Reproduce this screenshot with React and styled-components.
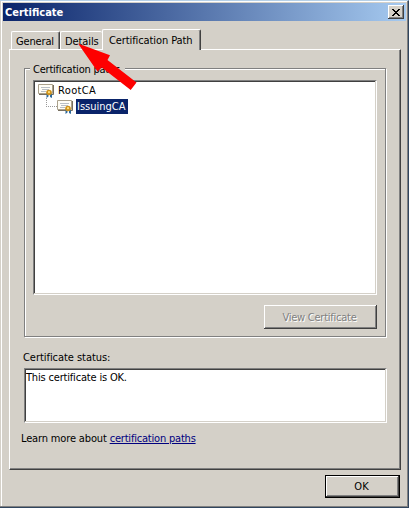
import React from "react";
import styled, { createGlobalStyle } from "styled-components";

const face = "#d4d0c8";
const shadow = "#808080";
const dark = "#404040";

const GlobalStyle = createGlobalStyle`
  * { box-sizing: border-box; }
  body { margin: 0; overflow: hidden; }
`;

const Window = styled.div`
  position: relative;
  display: flex;
  flex-direction: column;
  width: 409px;
  height: 508px;
  padding: 1px 1px 0 1px;
  background: ${face};
  border-style: solid;
  border-width: 1px 1px 1px 0;
  border-color: #b5d0e8 #30455e #30455e;
  box-shadow: inset -1px -1px 0 ${shadow}, inset 1px 0 0 ${face}, inset 2px 1px 0 #fff;
  font: 11px/13px "DejaVu Sans Condensed", "DejaVu Sans", sans-serif;
  font-stretch: condensed;
  color: #000;
  white-space: nowrap;
`;

const Text = styled.span`
  letter-spacing: ${(p) => p.$ls || 0}px;
`;

const TitleBar = styled.header`
  display: flex;
  align-items: center;
  justify-content: space-between;
  height: 18px;
  margin: 1px 1px 0 2px;
  padding: 0 2px 0 2px;
  background: linear-gradient(90deg, #0a246a, #a6caf0);
  color: #fff;
  font-weight: bold;
`;

const CloseButton = styled.button`
  display: flex;
  align-items: center;
  justify-content: center;
  width: 16px;
  height: 14px;
  padding: 0;
  border: 0;
  background: ${face};
  box-shadow: inset -1px -1px 0 ${dark}, inset 1px 1px 0 #fff, inset -2px -2px 0 ${shadow};
`;

const TabStrip = styled.nav`
  display: flex;
  align-items: flex-end;
  height: 28px;
  padding-left: 10px;
`;

const Tab = styled.div`
  position: relative;
  z-index: ${(p) => (p.$active ? 1 : 0)};
  width: ${(p) => p.$w}px;
  height: ${(p) => (p.$active ? 21 : 18)}px;
  margin-bottom: ${(p) => (p.$active ? -1 : 0)}px;
  padding: ${(p) => (p.$active ? "4px 0 0 6px" : "3px 0 0 4px")};
  background: ${face};
  border-top: 1px solid #fff;
  border-left: 1px solid #fff;
  border-right: ${(p) => (p.$edge ? `1px solid ${dark}` : "0")};
  border-radius: 2px 2px 0 0;
  box-shadow: ${(p) => (p.$edge ? `inset -1px 0 0 ${shadow}` : "none")};
`;

const Page = styled.main`
  display: flex;
  flex-direction: column;
  width: 392px;
  height: 421px;
  margin-left: 8px;
  padding: 18px 12px 0 14px;
  border: 1px solid;
  border-color: #fff ${dark} ${dark} #fff;
  box-shadow: inset -1px -1px 0 ${shadow};
`;

const Group = styled.section`
  display: flex;
  flex-direction: column;
  width: 362px;
  height: 269px;
  padding: 0 8px;
  border: 1px solid ${shadow};
  box-shadow: 1px 1px 0 #fff, inset 1px 1px 0 #fff;
`;

const Legend = styled.div`
  align-self: flex-start;
  width: 95px;
  height: 13px;
  margin: -6px 0 4px -3px;
  padding-left: 3px;
  background: ${face};
`;

const Sunken = styled.div`
  flex: none;
  width: ${(p) => p.$w}px;
  height: ${(p) => p.$h}px;
  padding: ${(p) => p.$pad};
  background: #fff;
  border: 1px solid;
  border-color: ${shadow} #fff #fff ${shadow};
  box-shadow: inset -1px -1px 0 ${face}, inset 1px 1px 0 ${dark};
`;

const TreeRow = styled.div`
  display: flex;
  align-items: center;
  height: 16px;
`;

const Branch = styled.span`
  width: 11px;
  height: 16px;
  margin-left: 8px;
  background:
    repeating-linear-gradient(180deg, #999 0 1px, transparent 1px 2px) 0 0 / 1px 9px no-repeat,
    repeating-linear-gradient(90deg, #999 0 1px, transparent 1px 2px) 0 8px / 11px 1px no-repeat;
`;

const NodeName = styled.span`
  height: 15px;
  padding: 1px;
  margin-left: 2px;
  background: ${(p) => (p.$selected ? "#0a246a" : "transparent")};
  color: ${(p) => (p.$selected ? "#fff" : "#000")};
  width: ${(p) => p.$w}px;
`;

const Button = styled.button`
  width: ${(p) => p.$w}px;
  height: ${(p) => p.$h}px;
  padding: 0 2px 0 0;
  font: inherit;
  background: ${face};
  border: ${(p) => (p.$default ? "1px solid #000" : "0")};
  box-shadow: inset -1px -1px 0 ${dark}, inset 1px 1px 0 #fff, inset -2px -2px 0 ${shadow};
  color: ${(p) => (p.disabled ? shadow : "#000")};
  text-shadow: ${(p) => (p.disabled ? "1px 1px 0 #fff" : "none")};
`;

const GroupActions = styled.div`
  display: flex;
  justify-content: flex-end;
  margin: 10px 0 0;
`;

const Caption = styled.div`
  margin: 14px 0 4px -1px;
`;

const Help = styled.p`
  margin: 9px 0 0 -3px;
`;

const Link = styled.a`
  color: #00007f;
  text-decoration: underline;
  text-underline-offset: 1px;
`;

const Footer = styled.footer`
  display: flex;
  justify-content: flex-end;
  padding: 5px 7px 0 0;
`;

const Pointer = styled.svg`
  position: absolute;
  z-index: 2;
  left: 76px;
  top: 37px;
`;

const CertificateIcon = () => (
  <svg width="17" height="16" viewBox="0 0 17 16">
    <path d="M0.5 2.5h14v9h-14z" fill="#fffdf5" stroke="#aaa18c" />
    <path d="M1 12.5h14.5V3" fill="none" stroke="#776f60" />
    <path d="M3 5.5h9M4 7.5h7M3 9.5h5" stroke="#b9bfc5" />
    <path d="M8.5 11v5l2-1.5V12zM14 12v4l-2-1v-3z" fill="#2f6a9c" />
    <circle cx="11" cy="10.5" r="2.8" fill="#d0921a" />
    <circle cx="11" cy="10.2" r="1.1" fill="#ffe27b" />
  </svg>
);

export default function App() {
  return (
    <>
      <GlobalStyle />
      <Window>
        <TitleBar>
          <Text>Certificate</Text>
          <CloseButton aria-label="Close">
            <svg width="8" height="7" viewBox="0 0 8 7" shapeRendering="crispEdges">
              <path d="M0 0h2v1h1v1h2v-1h1v-1h2v1h-1v1h-1v1h-1v1h1v1h1v1h1v1h-2v-1h-1v-1h-2v1h-1v1h-2v-1h1v-1h1v-1h1v-1h-1v-1h-1v-1h-1z" />
            </svg>
          </CloseButton>
        </TitleBar>
        <TabStrip>
          <Tab $w={49} $edge><Text $ls={-0.15}>General</Text></Tab>
          <Tab $w={42}><Text $ls={-0.1}>Details</Text></Tab>
          <Tab $w={99} $active $edge><Text $ls={-0.1}>Certification Path</Text></Tab>
        </TabStrip>
        <Page>
          <Group>
            <Legend><Text $ls={-0.22}>Certification paths</Text></Legend>
            <Sunken $w={344} $h={215} $pad="1px 4px">
              <TreeRow><CertificateIcon /><NodeName><Text $ls={0.35}>RootCA</Text></NodeName></TreeRow>
              <TreeRow><Branch /><CertificateIcon /><NodeName $selected $w={52}><Text>IssuingCA</Text></NodeName></TreeRow>
            </Sunken>
            <GroupActions>
              <Button $w={113} $h={24} disabled><Text $ls={-0.25}>View Certificate</Text></Button>
            </GroupActions>
          </Group>
          <Caption><Text $ls={-0.05}>Certificate status:</Text></Caption>
          <Sunken $w={363} $h={55} $pad="2px 1px"><Text $ls={-0.18}>This certificate is OK.</Text></Sunken>
          <Help><Text $ls={-0.15}>Learn more about </Text><Link><Text $ls={-0.2}>certification paths</Text></Link></Help>
        </Page>
        <Footer><Button $w={75} $h={23} $default><Text>OK</Text></Button></Footer>
        <Pointer width="64" height="54" viewBox="76 38 64 54" aria-hidden="true">
          <path d="M78 43.5L110 55.3L107.5 60L136.5 82.5L130.7 90L101.8 67.5L97.5 71.5Z" fill="#fe0000" />
        </Pointer>
      </Window>
    </>
  );
}
